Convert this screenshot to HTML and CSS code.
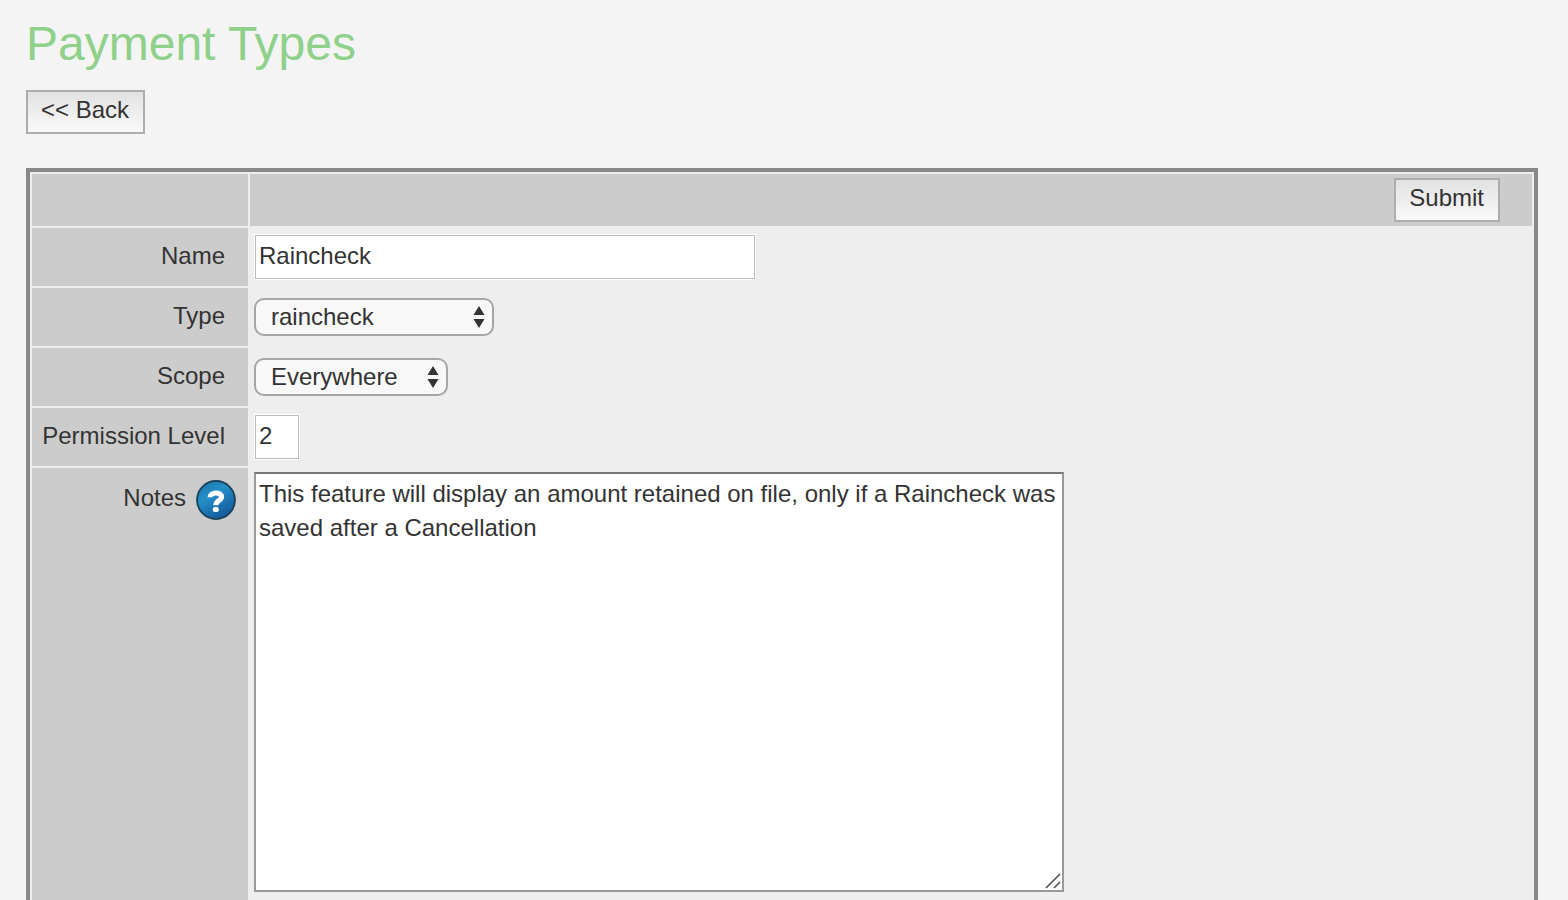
FILE: index.html
```html
<!DOCTYPE html>
<html lang="en">
<head>
<meta charset="utf-8">
<title>Payment Types</title>
<link rel="stylesheet" href="styles.css">
</head>
<body>
<h1 class="title">Payment Types</h1>
<button class="btn" type="button">&lt;&lt; Back</button>
<form class="panel">
  <div class="row row-head">
    <div class="label"></div>
    <div class="toolbar"><button class="btn" type="submit">Submit</button></div>
  </div>
  <div class="row">
    <label class="label" for="name">Name</label>
    <div class="field"><input class="text name" id="name" type="text" value="Raincheck"></div>
  </div>
  <div class="row">
    <label class="label" for="type">Type</label>
    <div class="field">
      <div class="picker picker-type">
        <select class="select" id="type"><option>raincheck</option></select>
        <svg class="arrows" width="12" height="22" viewBox="0 0 12 22" aria-hidden="true"><path d="M6 0l5.500 9H.500zM6 22l5.500-9H.500z" fill="#333"/></svg>
      </div>
    </div>
  </div>
  <div class="row">
    <label class="label" for="scope">Scope</label>
    <div class="field">
      <div class="picker picker-scope">
        <select class="select" id="scope"><option>Everywhere</option></select>
        <svg class="arrows" width="12" height="22" viewBox="0 0 12 22" aria-hidden="true"><path d="M6 0l5.500 9H.500zM6 22l5.500-9H.500z" fill="#333"/></svg>
      </div>
    </div>
  </div>
  <div class="row">
    <label class="label" for="level">Permission Level</label>
    <div class="field"><input class="text level" id="level" type="text" value="2"></div>
  </div>
  <div class="row row-notes">
    <div class="label label-notes">
      <label class="notes-text" for="notes">Notes</label>
      <svg width="40" height="40" viewBox="0 0 40 40" role="img" aria-label="Help">
        <defs>
          <linearGradient id="ball" x1=".2" y1="0" x2=".8" y2="1">
            <stop offset="0" stop-color="#1a78ae"/>
            <stop offset=".35" stop-color="#2490c8"/>
            <stop offset=".65" stop-color="#1b72b0"/>
            <stop offset="1" stop-color="#145596"/>
          </linearGradient>
        </defs>
        <circle cx="20" cy="20" r="19" fill="url(#ball)" stroke="#1c4258" stroke-width="1.800"/>
        <path d="M14 17.200C14 11.800 25.600 11.600 25.600 17C25.600 20.600 19.800 20.200 19.800 25.200" fill="none" stroke="#fff" stroke-width="5"/>
        <rect x="16.800" y="27" width="6" height="5" rx="2" fill="#fff"/>
      </svg>
    </div>
    <div class="field field-notes">
      <div class="notes-box">
        <textarea class="notes" id="notes">This feature will display an amount retained on file, only if a Raincheck was saved after a Cancellation</textarea>
        <svg class="grip" width="16" height="16" viewBox="0 0 16 16" aria-hidden="true"><path d="M1 15L15 1M9 15l6-6" stroke="#555" stroke-width="1.700" fill="none"/></svg>
      </div>
    </div>
  </div>
</form>
</body>
</html>
```

FILE: styles.css
```css
* { box-sizing: border-box; }

body {
  margin: 0;
  height: 100vh;
  overflow: hidden;
  padding: 16px 30px 0 26px;
  background: #f4f4f4;
  color: #333;
  font: 24px/34px "Liberation Sans", Arial, sans-serif;
}

.title {
  margin: 0 0 18px;
  color: #8fd08a;
  font-size: 48px;
  font-weight: 400;
  line-height: 56px;
}

.btn {
  display: block;
  height: 44px;
  padding: 0 14px 4px 13px;
  border: 2px solid #adadad;
  background: linear-gradient(#e2e2e2, #f9f9f9);
  color: #333;
  font: inherit;
}

.panel {
  display: flex;
  flex-direction: column;
  gap: 2px;
  margin-top: 34px;
  padding: 2px;
  border: 4px solid #888;
  background: #eee;
}

.row {
  display: grid;
  grid-template-columns: 216px 1fr;
  gap: 2px;
  min-height: 58px;
}

.row-head { min-height: 52px; }
.row-notes { min-height: 460px; }

.label {
  display: flex;
  align-items: center;
  justify-content: flex-end;
  padding: 0 23px 2px 0;
  background: #ccc;
  white-space: nowrap;
}

.label-notes {
  align-items: flex-start;
  gap: 10px;
  padding: 12px 12px 0 0;
}

.notes-text { padding-top: 1px; }

.toolbar {
  display: flex;
  align-items: center;
  justify-content: flex-end;
  padding-right: 32px;
  background: #ccc;
}

.field {
  display: flex;
  align-items: center;
  padding-left: 4px;
}

.field-notes {
  align-items: flex-start;
  padding-top: 4px;
}

.text {
  height: 44px;
  margin-left: 1px;
  padding: 0 3px 2px;
  border: 1px solid #bbb;
  outline: 1px solid #fff;
  background: #fff;
  color: inherit;
  font: inherit;
}

.name { width: 500px; }
.level { width: 44px; }

.picker { position: relative; }
.picker-type { width: 240px; }
.picker-scope { width: 194px; }

.select {
  display: block;
  appearance: none;
  width: 100%;
  height: 38px;
  padding: 0 32px 4px 15px;
  border: 2px solid #a6a6a6;
  border-radius: 10px;
  background: #f8f8f8;
  color: inherit;
  font: inherit;
}

.arrows {
  position: absolute;
  top: 8px;
  right: 9px;
  pointer-events: none;
}

.notes-box {
  position: relative;
  width: 810px;
}

.notes {
  display: block;
  width: 100%;
  height: 420px;
  padding: 3px;
  border: 2px solid #999;
  border-top-color: #777;
  background: #fff;
  color: inherit;
  font: inherit;
  resize: none;
}

.grip {
  position: absolute;
  right: 3px;
  bottom: 3px;
  pointer-events: none;
}
```
